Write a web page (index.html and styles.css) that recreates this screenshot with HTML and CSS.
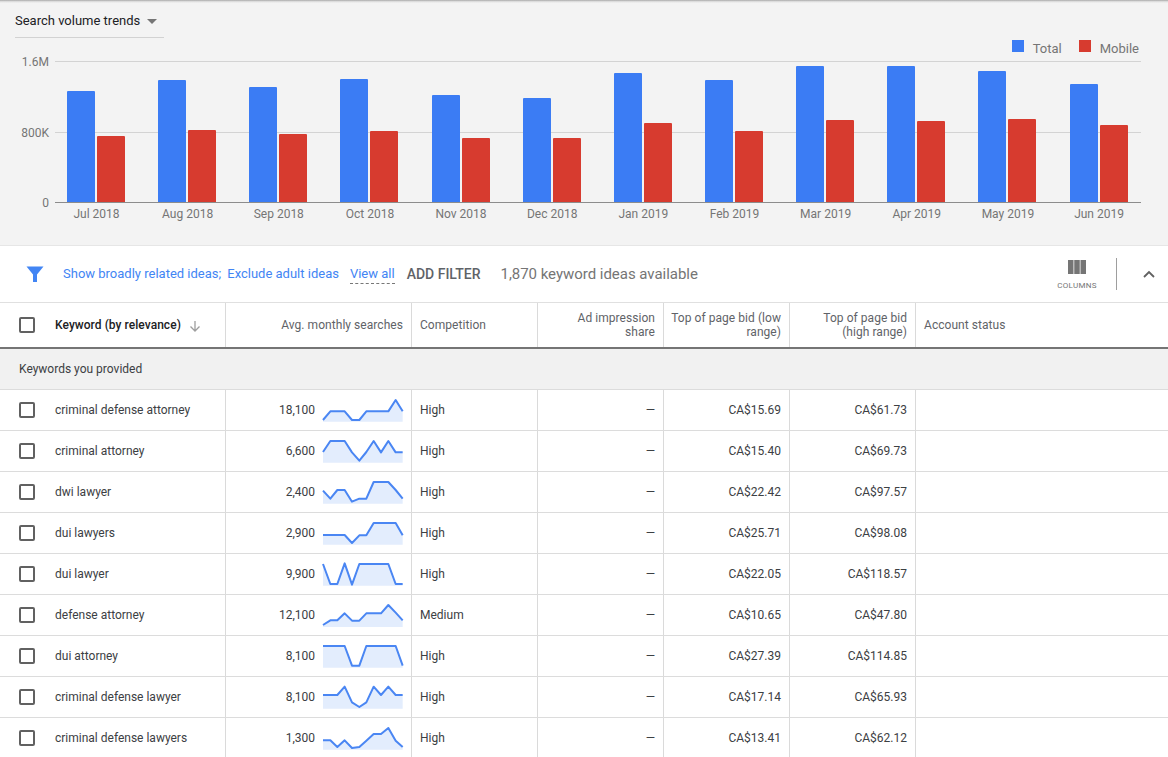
FILE: index.html
```html
<!DOCTYPE html>
<html lang="en">
<head>
<meta charset="utf-8">
<title>Keyword ideas</title>
<link rel="stylesheet" href="styles.css">
</head>
<body>
<section class="trends">
  <div class="trends-head">
    <div class="dropdown"><span>Search volume trends</span><i class="caret"></i></div>
  </div>
  <div class="legend">
    <span class="legend-item"><i class="swatch blue"></i>Total</span>
    <span class="legend-item"><i class="swatch red"></i>Mobile</span>
  </div>
  <div class="chart">
    <div class="y-axis"><span>1.6M</span><span>800K</span><span>0</span></div>
    <div class="plot">
      <i class="gridline g-top"></i><i class="gridline g-mid"></i><i class="gridline g-base"></i>
      <div class="months">
        <div class="month"><div class="bars"><i class="bar blue" style="height:111px"></i><i class="bar red" style="height:66px"></i></div><span class="month-label">Jul 2018</span></div>
        <div class="month"><div class="bars"><i class="bar blue" style="height:122px"></i><i class="bar red" style="height:72px"></i></div><span class="month-label">Aug 2018</span></div>
        <div class="month"><div class="bars"><i class="bar blue" style="height:115px"></i><i class="bar red" style="height:68px"></i></div><span class="month-label">Sep 2018</span></div>
        <div class="month"><div class="bars"><i class="bar blue" style="height:123px"></i><i class="bar red" style="height:71px"></i></div><span class="month-label">Oct 2018</span></div>
        <div class="month"><div class="bars"><i class="bar blue" style="height:107px"></i><i class="bar red" style="height:64px"></i></div><span class="month-label">Nov 2018</span></div>
        <div class="month"><div class="bars"><i class="bar blue" style="height:104px"></i><i class="bar red" style="height:64px"></i></div><span class="month-label">Dec 2018</span></div>
        <div class="month"><div class="bars"><i class="bar blue" style="height:129px"></i><i class="bar red" style="height:79px"></i></div><span class="month-label">Jan 2019</span></div>
        <div class="month"><div class="bars"><i class="bar blue" style="height:122px"></i><i class="bar red" style="height:71px"></i></div><span class="month-label">Feb 2019</span></div>
        <div class="month"><div class="bars"><i class="bar blue" style="height:136px"></i><i class="bar red" style="height:82px"></i></div><span class="month-label">Mar 2019</span></div>
        <div class="month"><div class="bars"><i class="bar blue" style="height:136px"></i><i class="bar red" style="height:81px"></i></div><span class="month-label">Apr 2019</span></div>
        <div class="month"><div class="bars"><i class="bar blue" style="height:131px"></i><i class="bar red" style="height:83px"></i></div><span class="month-label">May 2019</span></div>
        <div class="month"><div class="bars"><i class="bar blue" style="height:118px"></i><i class="bar red" style="height:77px"></i></div><span class="month-label">Jun 2019</span></div>
      </div>
    </div>
  </div>
</section>

<section class="filterbar">
  <svg class="funnel" viewBox="0 0 18 18" width="18" height="18"><path d="M0.500 1.500h17L11 9.600V17H7V9.600z"/></svg>
  <a class="link first">Show broadly related ideas;</a>
  <a class="link second">Exclude adult ideas</a>
  <a class="link dashed">View all</a>
  <span class="add">ADD FILTER</span>
  <span class="count">1,870 keyword ideas available</span>
  <div class="columns-btn">
    <svg viewBox="0 0 18 14" width="18" height="14"><path d="M0 0h5.500v14H0zM6.250 0h5.500v14h-5.500zM12.500 0H18v14h-5.500z"/></svg>
    <span>COLUMNS</span>
  </div>
  <i class="vsep"></i>
  <svg class="chev" viewBox="0 0 12 8" width="12" height="8"><path d="M1 7l5-5 5 5" /></svg>
</section>

<section class="table">
  <div class="row head">
    <div class="cell kw"><i class="check"></i><b>Keyword (by relevance)</b>
      <svg class="sort" viewBox="0 0 12 12" width="12" height="12"><path d="M6 1v10M1.500 6.500L6 11l4.500-4.500"/></svg>
    </div>
    <div class="cell num">Avg. monthly searches</div>
    <div class="cell">Competition</div>
    <div class="cell num">Ad impression<br>share</div>
    <div class="cell num">Top of page bid (low<br>range)</div>
    <div class="cell num">Top of page bid<br>(high range)</div>
    <div class="cell last">Account status</div>
  </div>
  <div class="group">Keywords you provided</div>

  <div class="row">
    <div class="cell kw"><i class="check"></i>criminal defense attorney</div>
    <div class="cell num searches">18,100
      <svg class="spark" viewBox="160 21 240 75"><path class="area" d="M160 90L182 64 203 64 225 64 247 90 269 90 290 64 312 64 334 64 356 64 378 30 399 64V95H160z"/><polyline points="160,90 182,64 203,64 225,64 247,90 269,90 290,64 312,64 334,64 356,64 378,30 399,64"/></svg>
    </div>
    <div class="cell">High</div><div class="cell num">—</div><div class="cell num">CA$15.69</div><div class="cell num">CA$61.73</div><div class="cell last"></div>
  </div>
  <div class="row">
    <div class="cell kw"><i class="check"></i>criminal attorney</div>
    <div class="cell num searches">6,600
      <svg class="spark" viewBox="160 144 240 75"><path class="area" d="M160 186L182 153 203 153 225 153 247 187 269 212 290 186 312 153 334 187 356 153 378 187 399 187V218H160z"/><polyline points="160,186 182,153 203,153 225,153 247,187 269,212 290,186 312,153 334,187 356,153 378,187 399,187"/></svg>
    </div>
    <div class="cell">High</div><div class="cell num">—</div><div class="cell num">CA$15.40</div><div class="cell num">CA$69.73</div><div class="cell last"></div>
  </div>
  <div class="row">
    <div class="cell kw"><i class="check"></i>dwi lawyer</div>
    <div class="cell num searches">2,400
      <svg class="spark" viewBox="160 267 240 75"><path class="area" d="M160 302L182 326 203 300 225 300 247 335 269 326 290 326 312 276 334 276 356 276 378 300 399 326V341H160z"/><polyline points="160,302 182,326 203,300 225,300 247,335 269,326 290,326 312,276 334,276 356,276 378,300 399,326"/></svg>
    </div>
    <div class="cell">High</div><div class="cell num">—</div><div class="cell num">CA$22.42</div><div class="cell num">CA$97.57</div><div class="cell last"></div>
  </div>
  <div class="row">
    <div class="cell kw"><i class="check"></i>dui lawyers</div>
    <div class="cell num searches">2,900
      <svg class="spark" viewBox="160 30 240 75"><path class="area" d="M160 75L182 75 203 75 225 75 247 99 269 76 290 76 312 39 334 39 356 39 378 39 399 76V104H160z"/><polyline points="160,75 182,75 203,75 225,75 247,99 269,76 290,76 312,39 334,39 356,39 378,39 399,76"/></svg>
    </div>
    <div class="cell">High</div><div class="cell num">—</div><div class="cell num">CA$25.71</div><div class="cell num">CA$98.08</div><div class="cell last"></div>
  </div>
  <div class="row">
    <div class="cell kw"><i class="check"></i>dui lawyer</div>
    <div class="cell num searches">9,900
      <svg class="spark" viewBox="160 153 240 75"><path class="area" d="M160 162L182 222 203 222 225 160 247 224 269 162 290 162 312 162 334 162 356 162 378 222 399 222V227H160z"/><polyline points="160,162 182,222 203,222 225,160 247,224 269,162 290,162 312,162 334,162 356,162 378,222 399,222"/></svg>
    </div>
    <div class="cell">High</div><div class="cell num">—</div><div class="cell num">CA$22.05</div><div class="cell num">CA$118.57</div><div class="cell last"></div>
  </div>
  <div class="row">
    <div class="cell kw"><i class="check"></i>defense attorney</div>
    <div class="cell num searches">12,100
      <svg class="spark" viewBox="160 276 240 75"><path class="area" d="M160 345L182 331 203 331 225 310 247 332 269 332 290 310 312 310 334 310 356 285 378 308 399 331V351H160z"/><polyline points="160,345 182,331 203,331 225,310 247,332 269,332 290,310 312,310 334,310 356,285 378,308 399,331"/></svg>
    </div>
    <div class="cell">Medium</div><div class="cell num">—</div><div class="cell num">CA$10.65</div><div class="cell num">CA$47.80</div><div class="cell last"></div>
  </div>
  <div class="row">
    <div class="cell kw"><i class="check"></i>dui attorney</div>
    <div class="cell num searches">8,100
      <svg class="spark" viewBox="160 33 240 75"><path class="area" d="M160 42L182 42 203 42 225 42 247 101 269 101 290 42 312 42 334 42 356 42 378 42 399 101V107H160z"/><polyline points="160,42 182,42 203,42 225,42 247,101 269,101 290,42 312,42 334,42 356,42 378,42 399,101"/></svg>
    </div>
    <div class="cell">High</div><div class="cell num">—</div><div class="cell num">CA$27.39</div><div class="cell num">CA$114.85</div><div class="cell last"></div>
  </div>
  <div class="row">
    <div class="cell kw"><i class="check"></i>criminal defense lawyer</div>
    <div class="cell num searches">8,100
      <svg class="spark" viewBox="160 156 240 75"><path class="area" d="M160 189L182 189 203 189 225 164 247 211 269 225 290 211 312 164 334 189 356 164 378 189 399 189V230H160z"/><polyline points="160,189 182,189 203,189 225,164 247,211 269,225 290,211 312,164 334,189 356,164 378,189 399,189"/></svg>
    </div>
    <div class="cell">High</div><div class="cell num">—</div><div class="cell num">CA$17.14</div><div class="cell num">CA$65.93</div><div class="cell last"></div>
  </div>
  <div class="row">
    <div class="cell kw"><i class="check"></i>criminal defense lawyers</div>
    <div class="cell num searches">1,300
      <svg class="spark" viewBox="160 279 240 75"><path class="area" d="M160 325L182 325 203 345 225 325 247 348 269 345 290 326 312 306 334 306 356 288 378 326 399 345V353H160z"/><polyline points="160,325 182,325 203,345 225,325 247,348 269,345 290,326 312,306 334,306 356,288 378,326 399,345"/></svg>
    </div>
    <div class="cell">High</div><div class="cell num">—</div><div class="cell num">CA$13.41</div><div class="cell num">CA$62.12</div><div class="cell last"></div>
  </div>
</section>
</body>
</html>
```
FILE: styles.css
```css
* { box-sizing: border-box; }
html, body { margin: 0; height: 757px; overflow: hidden; background: #fff; }
body { font-family: Roboto, "Liberation Sans", sans-serif; color: #3c4043; width: 1168px; }

.trends {
  height: 245px;
  background: linear-gradient(#a8a8a8, #dcdcdc 1.5px, #f3f3f3 3px);
  padding: 2px 27px 0 15px;
  position: relative;
}
.trends-head { height: 35px; padding-top: 10px; }
.dropdown {
  width: 149px;
  height: 26px;
  border-bottom: 1px solid #d2d2d2;
  font-size: 13px;
  line-height: 17px;
  color: #202124;
  display: flex;
  gap: 7px;
}
.caret {
  margin-top: 7px;
  width: 0; height: 0;
  border-left: 5px solid transparent;
  border-right: 5px solid transparent;
  border-top: 5px solid #757575;
}
.legend {
  position: absolute;
  top: 41px;
  right: 29px;
  display: flex;
  gap: 17px;
  font-size: 13px;
  line-height: 16px;
  color: #757575;
}
.legend-item { display: flex; align-items: center; gap: 9px; }
.swatch { width: 12px; height: 12px; margin-top: -6px; }
.blue { background: #3b7cf4; }
.red { background: #d73b2f; }

.chart { display: flex; margin-top: 24px; }
.y-axis {
  width: 34px;
  height: 155px;
  margin-top: -6px;
  display: flex;
  flex-direction: column;
  justify-content: space-between;
  font-size: 12px;
  line-height: 14px;
  color: #757575;
  text-align: right;
}
.plot { position: relative; width: 1086px; margin-left: 6px; height: 141px; }
.gridline { position: absolute; left: 0; right: 0; height: 1px; background: #d3d3d3; }
.g-top { top: 0; }
.g-mid { top: 71px; }
.g-base { top: 141px; background: #8c8c8c; }
.months { display: flex; gap: 33.15px; padding-left: 12px; position: relative; }
.month { width: 58px; flex: none; display: flex; flex-direction: column; align-items: center; }
.bars { height: 141px; width: 58px; display: flex; gap: 2px; align-items: flex-end; }
.bar { width: 28px; border-radius: 1px 1px 0 0; display: block; }
.month-label { margin-top: 5px; margin-left: 1px; font-size: 12px; line-height: 14px; color: #757575; white-space: nowrap; }

.filterbar {
  height: 58px;
  border-top: 1px solid #e6e6e6;
  border-bottom: 1px solid #e0e0e0;
  display: flex;
  align-items: center;
  padding-left: 26px;
  position: relative;
  font-size: 13px;
}
.funnel { fill: #4285f4; flex: none; margin-right: 19px; }
.link { color: #4285f4; line-height: 16px; white-space: nowrap; }
.second { margin-left: 6px; }
.dashed { margin-left: 11px; border-bottom: 1px dashed #777; padding-bottom: 1px; margin-top: 2px; }
.add { margin-left: 12px; font-size: 14px; font-weight: 500; color: #5f6368; }
.count { margin-left: 20px; font-size: 15px; letter-spacing: -0.03px; color: #757575; }
.columns-btn {
  margin-left: auto;
  width: 60px;
  display: flex;
  flex-direction: column;
  align-items: center;
  gap: 7px;
  font-size: 8px;
  letter-spacing: 0.3px;
  color: #757575;
  margin-top: 1px;
}
.columns-btn svg { fill: #757575; }
.vsep { width: 1px; height: 32px; background: #9e9e9e; margin: 0 26px 0 9px; }
.chev { fill: none; stroke: #616161; stroke-width: 1.8; margin-right: 13px; }

.table { font-size: 12px; }
.row {
  display: grid;
  grid-template-columns: 226px 186px 126px 126px 126px 126px 1fr;
  height: 41px;
  border-bottom: 1px solid #dcdcdc;
}
.head {
  height: 46px;
  border-bottom: 2px solid #757575;
  color: #5f6368;
  line-height: 14px;
  letter-spacing: 0.05px;
}
.cell {
  border-right: 1px solid #dadada;
  padding: 0 8px;
  display: flex;
  align-items: center;
  color: #3c4043;
}
.head .cell { color: #5f6368; white-space: nowrap; }
.cell.last { border-right: 0; }
.num { justify-content: flex-end; text-align: right; }
.kw { padding-left: 19px; gap: 20px; }
.kw b { font-weight: 500; color: #202124; white-space: nowrap; }
.sort { fill: none; stroke: #9e9e9e; stroke-width: 1.3; margin-left: -12px; margin-top: 2px; flex: none; }
.check {
  width: 16px; height: 16px;
  border: 2px solid #616161;
  border-radius: 2px;
  flex: none;
}
.searches { gap: 8px; }
.spark { width: 80px; height: 25px; flex: none; overflow: visible; margin-top: -1px; }
.spark .area { fill: #e3edfd; }
.spark polyline { fill: none; stroke: #4a86f3; stroke-width: 6; stroke-linejoin: round; }
.group {
  height: 41px;
  background: #f1f1f1;
  border-bottom: 1px solid #dcdcdc;
  padding-left: 19px;
  line-height: 40px;
  color: #3c4043;
}
```
